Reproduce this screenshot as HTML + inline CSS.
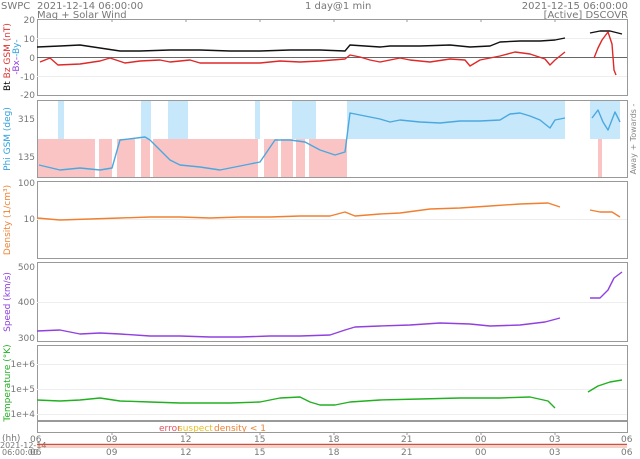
<!DOCTYPE html><html><head><style>
body{margin:0;background:#fff;width:640px;height:455px;overflow:hidden;font-family:"DejaVu Sans","Liberation Sans",sans-serif}
svg text{font-family:"DejaVu Sans","Liberation Sans",sans-serif}
</style></head><body>
<svg width="640" height="455" viewBox="0 0 640 455" xmlns="http://www.w3.org/2000/svg">
<g font-size="10" fill="#777">
<text x="1" y="9">SWPC</text>
<text x="37" y="9">2021-12-14 06:00:00</text>
<text x="37" y="18">Mag + Solar Wind</text>
<text x="305" y="9">1 day@1 min</text>
<text x="628" y="9" text-anchor="end">2021-12-15 06:00:00</text>
<text x="628" y="18" text-anchor="end">[Active] DSCOVR</text>
</g>
<g>
<rect x="37" y="139" width="310" height="38" fill="#fbc4c4"/>
<rect x="95" y="139" width="4" height="38" fill="#fff"/>
<rect x="112" y="139" width="5" height="38" fill="#fff"/>
<rect x="135" y="139" width="6" height="38" fill="#fff"/>
<rect x="150" y="139" width="3" height="38" fill="#fff"/>
<rect x="258" y="139" width="6" height="38" fill="#fff"/>
<rect x="278" y="139" width="3" height="38" fill="#fff"/>
<rect x="293" y="139" width="3" height="38" fill="#fff"/>
<rect x="305" y="139" width="4" height="38" fill="#fff"/>
<rect x="58" y="100" width="6" height="39" fill="#c6e8fa"/>
<rect x="141" y="100" width="10" height="39" fill="#c6e8fa"/>
<rect x="168" y="100" width="20" height="39" fill="#c6e8fa"/>
<rect x="292" y="100" width="24" height="39" fill="#c6e8fa"/>
<rect x="255" y="100" width="5" height="39" fill="#c6e8fa"/>
<rect x="347" y="100" width="218" height="39" fill="#c6e8fa"/>
<rect x="590" y="100" width="30" height="39" fill="#c6e8fa"/>
<rect x="598" y="139" width="4" height="38" fill="#fbc4c4"/>
</g>
<g fill="none" stroke="#999" stroke-width="1">
<rect x="37.5" y="19.5" width="590" height="76"/>
<rect x="37.5" y="100.5" width="590" height="77"/>
<rect x="37.5" y="181.5" width="590" height="77"/>
<rect x="37.5" y="262.5" width="590" height="79"/>
<rect x="37.5" y="345.5" width="590" height="75"/>
<rect x="37.5" y="421.5" width="590" height="11"/>
</g>
<line x1="37" y1="57.5" x2="627" y2="57.5" stroke="#666"/>
<g stroke="#eee">
<line x1="37" y1="38.5" x2="627" y2="38.5"/><line x1="37" y1="76.5" x2="627" y2="76.5"/>
<line x1="37" y1="219.5" x2="627" y2="219.5"/><line x1="37" y1="302.5" x2="627" y2="302.5"/>
<line x1="37" y1="364.5" x2="627" y2="364.5"/><line x1="37" y1="389.5" x2="627" y2="389.5"/><line x1="37" y1="414.5" x2="627" y2="414.5"/>
</g>
<g stroke="#999">
<path d="M112 19v3M186 19v3M260 19v3M334 19v3M407 19v3M481 19v3M555 19v3M112 432v3M186 432v3M260 432v3M334 432v3M407 432v3M481 432v3M555 432v3"/>
</g>
<g font-size="9" fill="#777" text-anchor="end">
<text x="35" y="23">20</text><text x="35" y="42">10</text><text x="35" y="61">0</text><text x="35" y="80">-10</text><text x="35" y="98">-20</text>
<text x="35" y="122">315</text><text x="35" y="160">135</text>
<text x="35" y="186">100</text><text x="35" y="222">10</text>
<text x="35" y="270">500</text><text x="35" y="305">400</text><text x="35" y="341">300</text>
<text x="35" y="367">1e+6</text><text x="35" y="392">1e+5</text><text x="35" y="417">1e+4</text>
</g>
<g font-size="9" fill="#777">
<text x="30" y="442">06</text><text x="106" y="442">09</text><text x="180" y="442">12</text><text x="254" y="442">15</text><text x="328" y="442">18</text><text x="401" y="442">21</text><text x="475" y="442">00</text><text x="549" y="442">03</text><text x="621" y="442">06</text>
<text x="30" y="455">06</text><text x="106" y="455">09</text><text x="180" y="455">12</text><text x="254" y="455">15</text><text x="328" y="455">18</text><text x="401" y="455">21</text><text x="475" y="455">00</text><text x="549" y="455">03</text><text x="621" y="455">06</text>
<text x="2" y="441">(hh)</text>
<text x="0" y="448" font-size="8">2021-12-14</text>
<text x="2" y="455" font-size="8">06:00:00</text>
</g>
<line x1="37" y1="444.5" x2="627" y2="444.5" stroke="#d0503c" stroke-width="1.5"/>
<line x1="37" y1="447" x2="627" y2="447" stroke="#e8a090" stroke-width="1"/>
<g font-size="9">
<text x="159" y="431" fill="#e85060">error</text><text x="178" y="431" fill="#e8c020">suspect</text><text x="214" y="431" fill="#f08030">density &lt; 1</text>
</g>
<g font-size="9" text-anchor="middle">
<text transform="translate(10,57) rotate(-90)"><tspan fill="#000">Bt</tspan> <tspan fill="#e03030">Bz GSM (nT)</tspan></text>
<text transform="translate(19,57) rotate(-90)"><tspan fill="#9040e0">-Bx-</tspan><tspan fill="#30a0e0">-By-</tspan></text>
<text transform="translate(10,139) rotate(-90)" fill="#30a0e0">Phi GSM (deg)</text>
<text transform="translate(10,220) rotate(-90)" fill="#f08030">Density (1/cm³)</text>
<text transform="translate(10,302) rotate(-90)" fill="#9040e0">Speed (km/s)</text>
<text transform="translate(10,383) rotate(-90)" fill="#20b020">Temperature (°K)</text>
<text transform="translate(636,139) rotate(-90)" fill="#888" font-size="8">Away +  Towards -</text>
</g>
<g fill="none" stroke-width="1.4" stroke-linejoin="round">
<polyline stroke="#111" points="37,47 60,46 80,45 100,48 120,51 140,51 170,50 200,50 230,51 260,51 290,50 320,50 345,51 350,45 380,47 390,46 420,46 450,45 470,47 490,46 500,42 520,41 540,41 555,40 565,38"/>
<polyline stroke="#111" points="590,33 600,31 610,31 618,33 622,34"/>
<polyline stroke="#e02828" points="40,62 50,58 58,65 80,64 100,61 110,58 125,63 140,61 160,60 170,62 190,60 200,63 230,63 260,63 280,61 300,62 320,61 345,59 350,55 360,57 370,60 380,62 400,58 410,60 430,62 450,59 465,60 470,66 480,60 500,56 515,52 530,54 545,59 550,65 555,60 565,52"/>
<polyline stroke="#e02828" points="594,58 598,48 602,40 608,32 612,44 614,70 616,75"/>
<polyline stroke="#4aa8e0" points="39,165 60,170 80,168 100,170 112,168 120,140 145,137 150,140 160,150 170,160 180,165 200,167 220,170 250,164 260,162 275,140 290,140 305,142 320,150 335,155 345,152 350,113 365,116 380,119 390,122 400,120 420,122 440,123 460,121 480,121 500,120 510,114 520,113 530,116 540,120 550,128 555,120 565,118"/>
<polyline stroke="#4aa8e0" points="592,118 598,110 603,122 608,130 615,112 620,122"/>
<polyline stroke="#f08030" points="37,218 60,220 90,219 120,218 150,217 180,217 210,218 240,217 270,217 300,216 330,216 345,212 355,216 380,214 400,213 430,209 460,208 490,206 520,204 548,203 560,207"/>
<polyline stroke="#f08030" points="590,210 600,212 612,212 620,217"/>
<polyline stroke="#9040e0" points="37,331 60,330 80,334 100,333 120,334 150,336 180,336 210,337 240,337 270,336 300,336 330,335 345,330 355,327 380,326 410,325 440,323 470,324 490,326 520,325 545,322 560,318"/>
<polyline stroke="#9040e0" points="590,298 600,298 608,290 614,278 622,272"/>
<polyline stroke="#20b020" points="37,400 60,401 80,400 100,398 120,401 150,402 180,403 200,403 230,403 260,402 280,398 300,397 310,402 320,405 335,405 350,402 380,400 420,399 460,398 500,398 530,397 548,401 555,408"/>
<polyline stroke="#20b020" points="588,392 598,386 610,382 622,380"/>
</g>
</svg>
</body></html>
